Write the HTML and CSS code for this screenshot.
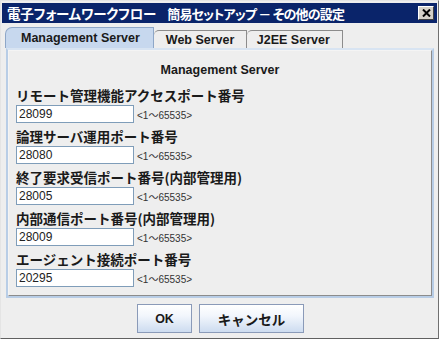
FILE: index.html
```html
<!DOCTYPE html>
<html lang="ja">
<head>
    <meta charset="UTF-8">
    <title>簡易セットアップ</title>
    <link rel="stylesheet" href="styles.css">
</head>
<body>
    <div class="window">
        <div class="title-bar">
            <span class="title-text"><span class="title-app">電子フォームワークフロー</span>簡易セットアップ － その他の設定</span>
            <button class="close-btn" aria-label="閉じる">
                <svg width="9" height="8" viewBox="0 0 9 8">
                    <path d="M1 0.5 L8 7.5 M8 0.5 L1 7.5" stroke="#000" stroke-width="2"></path>
                </svg>
            </button>
        </div>

        <div class="dialog-body">
            <div class="tabs">
                <div class="tab active">Management Server</div>
                <div class="tab">Web Server</div>
                <div class="tab">J2EE Server</div>
            </div>

            <div class="panel">
                <div class="panel-inner">
                    <h2 class="panel-title">Management Server</h2>

                    <div class="field">
                        <label>リモート管理機能アクセスポート番号</label>
                        <div class="field-row">
                            <input type="text" value="28099">
                            <span class="range">&lt;1～65535&gt;</span>
                        </div>
                    </div>
                    <div class="field">
                        <label>論理サーバ運用ポート番号</label>
                        <div class="field-row">
                            <input type="text" value="28080">
                            <span class="range">&lt;1～65535&gt;</span>
                        </div>
                    </div>
                    <div class="field">
                        <label>終了要求受信ポート番号(内部管理用)</label>
                        <div class="field-row">
                            <input type="text" value="28005">
                            <span class="range">&lt;1～65535&gt;</span>
                        </div>
                    </div>
                    <div class="field">
                        <label>内部通信ポート番号(内部管理用)</label>
                        <div class="field-row">
                            <input type="text" value="28009">
                            <span class="range">&lt;1～65535&gt;</span>
                        </div>
                    </div>
                    <div class="field">
                        <label>エージェント接続ポート番号</label>
                        <div class="field-row">
                            <input type="text" value="20295">
                            <span class="range">&lt;1～65535&gt;</span>
                        </div>
                    </div>
                </div>
            </div>

            <div class="buttons">
                <button class="btn btn-ok">OK</button>
                <button class="btn btn-cancel">キャンセル</button>
            </div>
        </div>
    </div>
</body>
</html>
```

FILE: styles.css
```css
/* Java Swing style dialog */

:root {
    --navy: #0a246a;
    --face: #eeeeee;
    --tab-blue: #c7d8ee;
    --panel-blue: #b8cde6;
    --text: #222222;
    --jp: "Noto Sans CJK JP", sans-serif;
    --latin: "Liberation Sans", "Noto Sans CJK JP", sans-serif;
}

body {
    margin: 0;
    background: #ffffff;
    font-family: var(--latin);
    color: var(--text);
}

/* Window frame */
.window {
    width: 439px;
    height: 339px;
    box-sizing: border-box;
    padding: 2px 1px 0 1px;
    background: var(--face);
    border: 1px solid;
    border-color: #e4e4e4 #707070 #606060 #e4e4e4;
    display: flex;
    flex-direction: column;
}

/* Title bar */
.title-bar {
    height: 20px;
    background: var(--navy);
    display: flex;
    align-items: center;
    justify-content: space-between;
    padding: 0 3px 0 5px;
}

.title-text {
    color: #ffffff;
    font-family: var(--jp);
    font-weight: 700;
    font-size: 13px;
    letter-spacing: -0.8px;
    font-feature-settings: "palt";
    line-height: 20px;
    white-space: nowrap;
}

/* app name is set a little wider than the rest, like the bitmap font */
.title-app {
    font-size: 13.5px;
    letter-spacing: -0.2px;
    margin-right: 11px;
}

.close-btn {
    width: 16px;
    height: 14px;
    padding: 0;
    background: #d4d0c8;
    border: 1px solid;
    border-color: #ffffff #404040 #404040 #ffffff;
    display: flex;
    align-items: center;
    justify-content: center;
}

/* Dialog body */
.dialog-body {
    flex: 1;
    display: flex;
    flex-direction: column;
    padding: 4px 1px 0 3px;
}

/* Tabs */
.tabs {
    display: flex;
    align-items: flex-end;
    height: 21px;
}

.tab {
    height: 18px;
    box-sizing: border-box;
    border: 1px solid #8c8c8c;
    border-bottom: none;
    border-left: none;
    border-radius: 5px 0 0 0;
    background: var(--face);
    font-weight: 700;
    font-size: 12.5px;
    line-height: 18px;
    padding: 0 11px 0 12px;
    color: #1a1a1a;
}

.tab.active {
    height: 21px;
    line-height: 21px;
    border-left: 1px solid #8c8c8c;
    background: var(--tab-blue);
    border-color: #8ea7c8;
    padding: 0 13px 0 15px;
    border-radius: 7px 0 0 0;
}

.tab:nth-child(2) { width: 93px; }
.tab:nth-child(3) { width: 96px; padding-left: 10px; }

/* Panel */
.panel {
    height: 250px;
    box-sizing: border-box;
    margin-left: 1px;
    margin-right: 2px;
    border: 2px solid var(--panel-blue);
    border-top-color: #d8e4f2;
    background: #ffffff;
}

.panel-inner {
    height: 100%;
    box-sizing: border-box;
    border: 1px solid;
    border-color: #f4f4f4 #8c8c8c #8c8c8c #f4f4f4;
    background: var(--face);
    padding: 9px 7px 0 7px;
}

.panel-title {
    margin: 0 0 5px 0;
    text-align: center;
    font-size: 12.5px;
    font-weight: 700;
    line-height: 20px;
    color: #1a1a1a;
}

/* Fields */
.field {
    margin-bottom: 3px;
}

.field label {
    display: block;
    font-family: var(--jp);
    font-weight: 700;
    font-size: 13.5px;
    line-height: 20px;
    color: #1a1a1a;
    white-space: nowrap;
}

.field-row {
    display: flex;
    align-items: center;
    height: 18px;
}

.field-row input {
    width: 118px;
    height: 18px;
    box-sizing: border-box;
    border: 1px solid #7f9db9;
    background: #ffffff;
    font-family: var(--latin);
    font-size: 12px;
    color: #222222;
    padding: 0 2px;
    margin: 0;
    outline: none;
}

.range {
    margin-left: 3px;
    font-size: 10px;
    color: #333333;
}

/* Buttons */
.buttons {
    display: flex;
    justify-content: center;
    gap: 7px;
    padding-top: 6px;
}

.btn {
    height: 29px;
    box-sizing: border-box;
    border: 1px solid #8a9ab8;
    background: linear-gradient(#ffffff, #f2f6fc 40%, #cddcf0);
    font-weight: 700;
    color: #1a1a1a;
    padding: 0;
}

.btn-ok {
    width: 55px;
    font-family: var(--latin);
    font-size: 12.5px;
}

.btn-cancel {
    width: 105px;
    font-family: var(--jp);
    font-size: 13.5px;
}
```
